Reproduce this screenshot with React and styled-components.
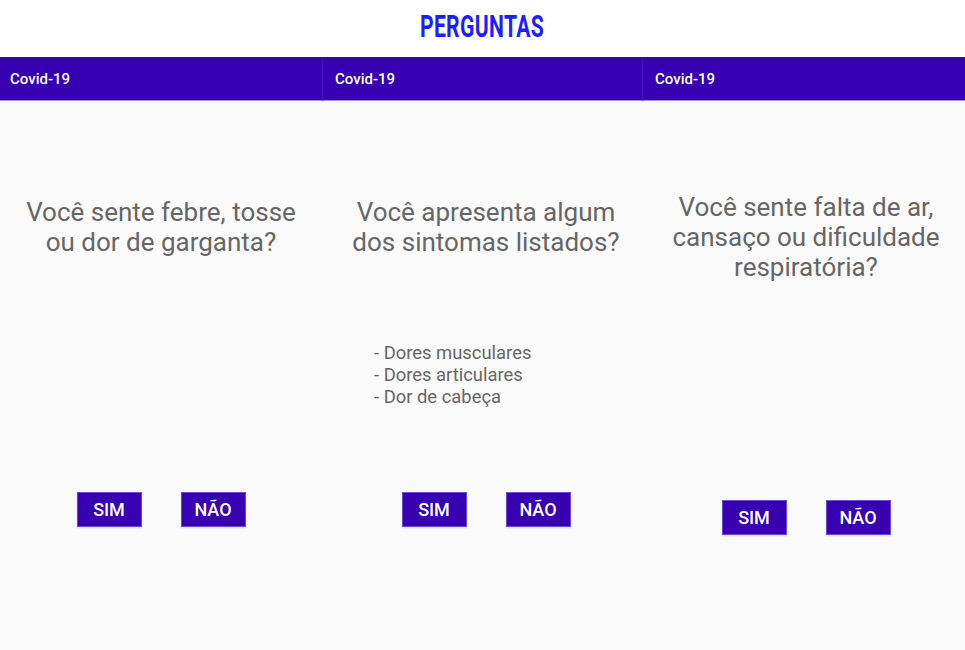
import React from 'react'
import styled, { createGlobalStyle } from 'styled-components'

const GlobalStyle = createGlobalStyle`
  html, body { margin: 0; padding: 0; background: #fafafa; }
  body { font-family: Roboto, "Liberation Sans", sans-serif; }
`

const questions = [
  {
    id: 1,
    text: ['Você sente febre, tosse', 'ou dor de garganta?'],
    top: 96,
    gap: 235,
    pad: 10,
    shift: 0,
  },
  {
    id: 2,
    text: ['Você apresenta algum', 'dos sintomas listados?'],
    list: ['- Dores musculares', '- Dores articulares', '- Dor de cabeça'],
    top: 96,
    gap: 235,
    pad: 12,
    shift: 8,
  },
  {
    id: 3,
    text: ['Você sente falta de ar,', 'cansaço ou dificuldade', 'respiratória?'],
    top: 91,
    gap: 218,
    pad: 12,
    shift: 5,
  },
]

const Page = () => {
  return (
    <Wrapper>
      <GlobalStyle />
      <TitleBar>
        <Title>PERGUNTAS</Title>
      </TitleBar>
      <Columns>
        {questions.map((q) => (
          <Card key={q.id}>
            <CardHeader $pad={q.pad}>Covid-19</CardHeader>
            <CardBody $top={q.top} $shift={q.shift}>
              <Question>
                {q.text.map((line) => (
                  <span key={line}>{line}</span>
                ))}
              </Question>
              <Middle $h={q.gap}>
                {q.list && (
                  <Symptoms>
                    {q.list.map((item) => (
                      <li key={item}>{item}</li>
                    ))}
                  </Symptoms>
                )}
              </Middle>
              <Buttons>
                <Answer>SIM</Answer>
                <Answer>NÃO</Answer>
              </Buttons>
            </CardBody>
          </Card>
        ))}
      </Columns>
    </Wrapper>
  )
}

export default Page

const Wrapper = styled.div`
  width: 965px;
  height: 650px;
  display: flex;
  flex-direction: column;
  background: #fafafa;
  overflow: hidden;
`

const TitleBar = styled.div`
  height: 57px;
  background: #fff;
  display: flex;
  align-items: center;
  justify-content: center;
`

const Title = styled.h1`
  margin: 0;
  font-family: Roboto, "Liberation Sans", sans-serif;
  font-weight: 700;
  font-size: 32px;
  letter-spacing: 0.5px;
  color: #1d1dff;
  transform: scaleX(0.66);
  margin-top: -5px;
`

const Columns = styled.div`
  flex: 1;
  display: grid;
  grid-template-columns: 322px 320px 323px;
`

const Card = styled.div`
  display: flex;
  flex-direction: column;
  & + & > div:first-child {
    border-left: 1px solid #4512bd;
  }
`

const CardHeader = styled.div`
  height: 44px;
  box-sizing: border-box;
  background: #3700b0;
  border-bottom: 1px solid #a48ee6;
  display: flex;
  align-items: center;
  padding-left: ${(p) => p.$pad}px;
  padding-top: 1px;
  color: #fff;
  font-size: 15px;
  font-weight: 500;
`

const CardBody = styled.div`
  flex: 1;
  display: flex;
  flex-direction: column;
  align-items: center;
  padding-top: ${(p) => p.$top}px;
  padding-left: ${(p) => p.$shift}px;
`

const Question = styled.p`
  margin: 0;
  display: flex;
  flex-direction: column;
  align-items: center;
  font-size: 26px;
  line-height: 30px;
  color: #666;
`

const Middle = styled.div`
  height: ${(p) => p.$h}px;
  width: 100%;
  display: flex;
  justify-content: center;
`

const Symptoms = styled.ul`
  list-style: none;
  margin: 85px 0 0 0;
  padding: 0;
  width: 224px;
  font-size: 18.4px;
  line-height: 22px;
  color: #666;
`

const Buttons = styled.div`
  display: flex;
  gap: 39px;
`

const Answer = styled.button`
  width: 65px;
  height: 35px;
  background: #3700b0;
  border: 1px solid #6a4fd0;
  box-shadow: 0 1px 2px rgba(0, 0, 0, 0.15);
  color: #fff;
  font-family: Roboto, "Liberation Sans", sans-serif;
  font-size: 18px;
  font-weight: 500;
  padding: 0;
  cursor: pointer;
`
